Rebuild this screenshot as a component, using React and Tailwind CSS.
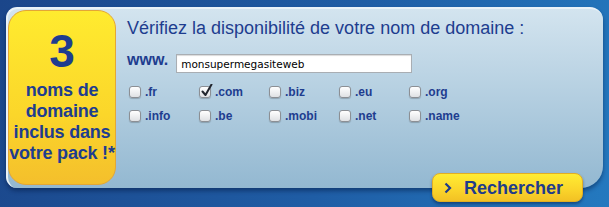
import React, { useState } from "react";

const row1 = [".fr", ".com", ".biz", ".eu", ".org"];
const row2 = [".info", ".be", ".mobi", ".net", ".name"];

function Box({ label, checked, onToggle }) {
  return (
    <label className="flex items-center gap-[4px] cursor-pointer h-[12px]">
      <span className="relative w-[12px] h-[12px] rounded-[3px] border border-[#8c8f94] bg-[linear-gradient(#ffffff,#dfe1e4)] shadow-[0_1px_1px_rgba(0,0,0,0.2)] shrink-0">
        {checked && (
          <svg className="absolute left-[1px] top-[-3px]" width="12" height="13" viewBox="0 0 12 13">
            <path d="M1.5 7.5 L4.5 11 L10.5 0.5" fill="none" stroke="#22262e" strokeWidth="2" strokeLinecap="round" strokeLinejoin="round" />
          </svg>
        )}
      </span>
      <input type="checkbox" checked={checked} onChange={onToggle} className="hidden" />
      <span className="text-[12px] leading-[12px] font-bold text-[#1e3d8f]">{label}</span>
    </label>
  );
}

export default function App() {
  const [domain, setDomain] = useState("monsupermegasiteweb");
  const [checked, setChecked] = useState({ ".com": true });

  const toggle = (ext) => {
    setChecked(prev => ({ ...prev, [ext]: !prev[ext] }));
  };

  return (
    <div className="relative w-[609px] h-[207px] overflow-hidden bg-[linear-gradient(105deg,#1b468a_0%,#1f5da5_55%,#2479bf_100%)] font-['Liberation_Sans',Arial,sans-serif]">
      <div className="absolute left-[6px] top-[7px] w-[597px] h-[181px] rounded-tl-[11px] rounded-bl-[11px] rounded-tr-[13px] rounded-br-[22px] border-t-2 border-l-2 border-[#e9f2f8] bg-[linear-gradient(#d3e4ef,#93b8d1)] shadow-[0_3px_4px_rgba(0,20,60,0.45)] flex pt-[1px]">
        <div className="w-[108px] h-[175px] rounded-[18px] border border-[#e3a636] bg-[linear-gradient(#ffeb2f,#fbd62a_60%,#f4bf2c)] flex flex-col items-center text-[#1e3d8f] font-bold shrink-0">
          <div className="mt-[17px] text-[46px] leading-[46px]">3</div>
          <div className="mt-[6px] text-[18px] leading-[21px] text-center whitespace-nowrap tracking-[-0.2px]">
            noms de<br />domaine<br />inclus dans<br />votre pack !*
          </div>
        </div>

        <div className="ml-[11px] flex flex-col">
          <div className="mt-[8px] text-[18px] leading-[20px] text-[#1e3d8f] whitespace-nowrap">
            Vérifiez la disponibilité de votre nom de domaine :
          </div>
          <div className="mt-[14px] flex items-start">
            <span className="text-[16px] leading-[15px] font-bold text-[#1e3d8f]">www.</span>
            <input
              value={domain}
              onChange={e => setDomain(e.target.value)}
              className="ml-[8px] mt-[2px] w-[236px] h-[19px] bg-white border border-[#a9aeb3] shadow-[inset_0_1px_1px_rgba(0,0,0,0.15)] px-[4px] text-[10.5px] text-black outline-none font-['DejaVu_Sans',Verdana,sans-serif]"
            />
          </div>
          <div className="mt-[13px] pl-[2px] grid grid-cols-[70px_70px_70px_70px_70px] gap-y-[12px]">
            {row1.concat(row2).map((ext) => (
              <Box key={ext} label={ext} checked={!!checked[ext]} onToggle={() => toggle(ext)} />
            ))}
          </div>
        </div>
      </div>

      <button className="absolute left-[432px] top-[173px] w-[151px] h-[29px] rounded-[8px] border border-[#e2ae22] bg-[linear-gradient(#ffec33,#fbd62b_55%,#f2c124)] shadow-[0_2px_3px_rgba(0,20,60,0.45)] flex items-center pl-[11px] text-[#1f3b8b]">
        <svg width="8" height="12" viewBox="0 0 8 12">
          <path d="M1.5 1.5 L6 6 L1.5 10.5" fill="none" stroke="#1f3b8b" strokeWidth="2.2" />
        </svg>
        <span className="ml-[12px] text-[18px] leading-[18px] font-bold">Rechercher</span>
      </button>
    </div>
  );
}
